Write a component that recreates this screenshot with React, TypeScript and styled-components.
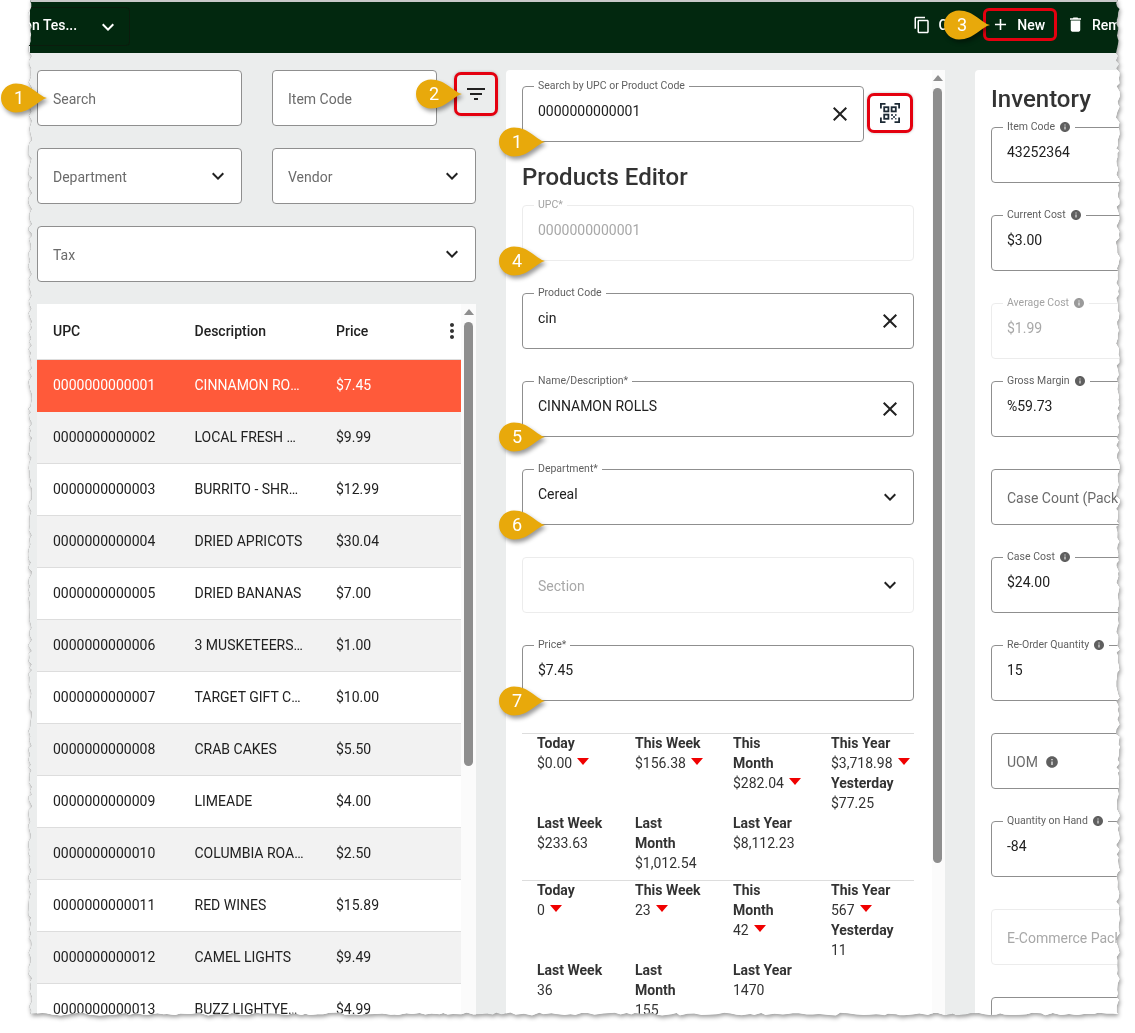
import React from 'react';
import styled, { createGlobalStyle } from 'styled-components';

const FONT = `Roboto, "Liberation Sans", sans-serif`;

const ICONS = {
  chevron: 'M16.59 8.59L12 13.17 7.41 8.59 6 10l6 6 6-6z',
  close: 'M19 6.41L17.59 5 12 10.59 6.41 5 5 6.41 10.59 12 5 17.59 6.41 19 12 13.41 17.59 19 19 17.59 13.41 12z',
  filter: 'M10 18h4v-2h-4v2zM3 6v2h18V6H3zm3 7h12v-2H6v2z',
  info: 'M12 2C6.48 2 2 6.48 2 12s4.48 10 10 10 10-4.48 10-10S17.52 2 12 2zm1 15h-2v-6h2v6zm0-8h-2V7h2v2z',
  copy: 'M16 1H4c-1.1 0-2 .9-2 2v14h2V3h12V1zm3 4H8c-1.1 0-2 .9-2 2v14c0 1.1.9 2 2 2h11c1.1 0 2-.9 2-2V7c0-1.1-.9-2-2-2zm0 16H8V7h11v14z',
  add: 'M19 13h-6v6h-2v-6H5v-2h6V5h2v6h6v2z',
  trash: 'M6 19c0 1.1.9 2 2 2h8c1.1 0 2-.9 2-2V7H6v12zM19 4h-3.5l-1-1h-5l-1 1H5v2h14V4z',
  dots: 'M12 8c1.1 0 2-.9 2-2s-.9-2-2-2-2 .9-2 2 .9 2 2 2zm0 2c-1.1 0-2 .9-2 2s.9 2 2 2 2-.9 2-2-.9-2-2-2zm0 6c-1.1 0-2 .9-2 2s.9 2 2 2 2-.9 2-2-.9-2-2-2z',
};

const rows = [
  ['0000000000001', 'CINNAMON ROLLS', '$7.45'],
  ['0000000000002', 'LOCAL FRESH WATER', '$9.99'],
  ['0000000000003', 'BURRITO - SHREDDED', '$12.99'],
  ['0000000000004', 'DRIED APRICOTS', '$30.04'],
  ['0000000000005', 'DRIED BANANAS', '$7.00'],
  ['0000000000006', '3 MUSKETEERS BAR', '$1.00'],
  ['0000000000007', 'TARGET GIFT CARD', '$10.00'],
  ['0000000000008', 'CRAB CAKES', '$5.50'],
  ['0000000000009', 'LIMEADE', '$4.00'],
  ['0000000000010', 'COLUMBIA ROAST', '$2.50'],
  ['0000000000011', 'RED WINES', '$15.89'],
  ['0000000000012', 'CAMEL LIGHTS', '$9.49'],
  ['0000000000013', 'BUZZ LIGHTYEAR', '$4.99'],
];

const salesStats = [
  [{ title: 'Today', value: '$0.00', down: true }],
  [{ title: 'This Week', value: '$156.38', down: true }],
  [{ title: 'This Month', value: '$282.04', down: true }],
  [{ title: 'This Year', value: '$3,718.98', down: true }, { title: 'Yesterday', value: '$77.25' }],
  [{ title: 'Last Week', value: '$233.63' }],
  [{ title: 'Last Month', value: '$1,012.54' }],
  [{ title: 'Last Year', value: '$8,112.23' }],
];

const unitStats = [
  [{ title: 'Today', value: '0', down: true }],
  [{ title: 'This Week', value: '23', down: true }],
  [{ title: 'This Month', value: '42', down: true }],
  [{ title: 'This Year', value: '567', down: true }, { title: 'Yesterday', value: '11' }],
  [{ title: 'Last Week', value: '36' }],
  [{ title: 'Last Month', value: '155' }],
  [{ title: 'Last Year', value: '1470' }],
];

const callouts = [
  { n: 1, x: 1, y: 83 },
  { n: 2, x: 416, y: 79 },
  { n: 1, x: 499, y: 127 },
  { n: 3, x: 944, y: 10 },
  { n: 4, x: 499, y: 246 },
  { n: 5, x: 499, y: 422 },
  { n: 6, x: 499, y: 510 },
  { n: 7, x: 499, y: 686 },
];

// rough torn paper edge, same every run
const tornEdge = () => {
  let seed = 11;
  const rnd = () => {
    seed = (seed * 16807) % 2147483647;
    return seed / 2147483647;
  };
  const pts: string[] = ['4px 0px', '1092px 0px'];
  for (let y = 3; y < 1014; y += 2 + rnd() * 4) pts.push(`${(1092 + (rnd() - 0.5) * 4).toFixed(1)}px ${y.toFixed(1)}px`);
  for (let x = 1092; x > 4; x -= 3 + rnd() * 7) pts.push(`${x.toFixed(1)}px ${(1014 + (rnd() - 0.5) * 3).toFixed(1)}px`);
  for (let y = 1014; y > 3; y -= 2 + rnd() * 4) pts.push(`${(4 + (rnd() - 0.5) * 4).toFixed(1)}px ${y.toFixed(1)}px`);
  return `polygon(${pts.join(',')})`;
};
const tornClip = tornEdge();

const Glyph = ({ d, size = 24, color = '#212121' }: { d: string; size?: number; color?: string }) => (
  <S_Svg viewBox="0 0 24 24" width={size} height={size} fill={color}>
    <path d={d} />
  </S_Svg>
);

const QrIcon = () => (
  <S_Svg viewBox="0 0 20 20" width={20} height={20}>
    <g fill="none" stroke="#1d2a35" strokeWidth="1.8">
      <path d="M.9 5.5V.9h4.6M14.5.9h4.6v4.6M.9 14.5v4.6h4.6M19.1 14.5v4.6h-4.6" />
      <rect x="4.2" y="4.2" width="4.2" height="4.2" />
      <rect x="11.6" y="4.2" width="4.2" height="4.2" />
      <rect x="4.2" y="11.6" width="4.2" height="4.2" />
    </g>
    <path fill="#4d5a66" d="M11 11h2v2h-2zM15 11h1.5v2H15zM13 13h2v2h-2zM11 15h2v1.5h-2zM15 15h1.5v1.5H15z" />
  </S_Svg>
);

interface FieldProps {
  label?: string;
  value?: string;
  placeholder?: string;
  info?: boolean;
  disabled?: boolean;
  trailing?: 'close' | 'chevron';
  width?: number;
  mb?: number;
}

const Field = ({ label, value, placeholder, info, disabled, trailing, width = 392, mb = 0 }: FieldProps) => (
  <S.FieldBox $width={width} $mb={mb} $disabled={disabled}>
    {label && (
      <S.FieldLabel $disabled={disabled}>
        {label}
        {info && <Glyph d={ICONS.info} size={12} color={disabled ? '#9a9a9a' : '#5f5f5f'} />}
      </S.FieldLabel>
    )}
    {value && <S.FieldValue $disabled={disabled}>{value}</S.FieldValue>}
    {placeholder && (
      <S.FieldPlaceholder $disabled={disabled}>
        {placeholder}
        {info && <Glyph d={ICONS.info} size={14} color="#5f5f5f" />}
      </S.FieldPlaceholder>
    )}
    {trailing && <Glyph d={ICONS[trailing]} />}
  </S.FieldBox>
);

const Stats = ({ items }: { items: { title: string; value: string; down?: boolean }[][] }) => (
  <S.StatsGrid>
    {items.map((cell, i) => (
      <S.StatCell key={i}>
        {cell.map((stat) => (
          <React.Fragment key={stat.title}>
            <S.StatTitle>{stat.title}</S.StatTitle>
            <S.StatValue>
              {stat.value}
              {stat.down && <S.DownMark />}
            </S.StatValue>
          </React.Fragment>
        ))}
      </S.StatCell>
    ))}
  </S.StatsGrid>
);

const App: React.FC = () => (
  <S.Page>
    <GlobalStyle />
    <S.TornFrame>
      <S.Sheet style={{ clipPath: tornClip }}>
        <S.Header>
          <S.Picker>
            <S.PickerText>on Tes...</S.PickerText>
            <Glyph d={ICONS.chevron} color="#fff" />
          </S.Picker>
          <S.Actions>
            <S.Action>
              <Glyph d={ICONS.copy} size={18} color="#fff" />
              Copy
            </S.Action>
            <S.NewAction>
              <Glyph d={ICONS.add} size={19} color="#fff" />
              New
            </S.NewAction>
            <S.RemoveAction>
              <Glyph d={ICONS.trash} size={19} color="#fff" />
              Remove
            </S.RemoveAction>
          </S.Actions>
        </S.Header>

        <S.Main>
          <S.ListColumn>
            <S.FilterRow>
              <Field placeholder="Search" width={205} />
              <Field placeholder="Item Code" width={165} />
              <S.FilterButton>
                <Glyph d={ICONS.filter} />
              </S.FilterButton>
            </S.FilterRow>
            <S.FilterRow>
              <Field placeholder="Department" trailing="chevron" width={205} />
              <Field placeholder="Vendor" trailing="chevron" width={204} />
            </S.FilterRow>
            <S.FilterRow>
              <Field placeholder="Tax" trailing="chevron" width={439} />
            </S.FilterRow>

            <S.TableWrap>
              <S.Table>
                <S.HeadRow>
                  <S.HeadCell>UPC</S.HeadCell>
                  <S.HeadCell>Description</S.HeadCell>
                  <S.HeadCell>Price</S.HeadCell>
                  <S.HeadMenu>
                    <Glyph d={ICONS.dots} color="#333" />
                  </S.HeadMenu>
                </S.HeadRow>
                {rows.map(([upc, name, price], i) => (
                  <S.Row key={upc} $selected={i === 0} $striped={i % 2 === 1}>
                    <S.Cell>{upc}</S.Cell>
                    <S.Cell>{name}</S.Cell>
                    <S.Cell>{price}</S.Cell>
                  </S.Row>
                ))}
              </S.Table>
              <S.ScrollTrack $width={15} $pad={3} $arrowTop={5} $gap={7}>
                <S.ScrollArrow />
                <S.ScrollThumb $height={444} />
              </S.ScrollTrack>
            </S.TableWrap>
          </S.ListColumn>

          <S.EditorPanel>
            <S.EditorBody>
              <S.SearchRow>
                <Field label="Search by UPC or Product Code" value="0000000000001" trailing="close" width={342} />
                <S.ScanButton>
                  <QrIcon />
                </S.ScanButton>
              </S.SearchRow>
              <S.EditorTitle>Products Editor</S.EditorTitle>
              <Field label="UPC*" value="0000000000001" disabled mb={32} />
              <Field label="Product Code" value="cin" trailing="close" mb={32} />
              <Field label="Name/Description*" value="CINNAMON ROLLS" trailing="close" mb={32} />
              <Field label="Department*" value="Cereal" trailing="chevron" mb={32} />
              <Field placeholder="Section" trailing="chevron" disabled mb={32} />
              <Field label="Price*" value="$7.45" mb={32} />
              <Stats items={salesStats} />
              <Stats items={unitStats} />
            </S.EditorBody>
            <S.ScrollTrack $width={13} $pad={1} $arrowTop={5} $gap={7}>
              <S.ScrollArrow />
              <S.ScrollThumb $height={775} />
            </S.ScrollTrack>
          </S.EditorPanel>

          <S.InventoryPanel>
            <S.InventoryTitle>Inventory</S.InventoryTitle>
            <Field label="Item Code" info value="43252364" mb={32} />
            <Field label="Current Cost" info value="$3.00" mb={32} />
            <Field label="Average Cost" info value="$1.99" disabled mb={22} />
            <Field label="Gross Margin" info value="%59.73" mb={32} />
            <Field placeholder="Case Count (Pack)" mb={32} />
            <Field label="Case Cost" info value="$24.00" mb={32} />
            <Field label="Re-Order Quantity" info value="15" mb={32} />
            <Field placeholder="UOM" info mb={32} />
            <Field label="Quantity on Hand" info value="-84" mb={32} />
            <Field placeholder="E-Commerce Pack" disabled mb={32} />
            <Field mb={32} />
          </S.InventoryPanel>
        </S.Main>
      </S.Sheet>
    </S.TornFrame>

    {callouts.map((c, i) => (
      <S.Callout key={i} $x={c.x} $y={c.y}>
        <S.CalloutShape viewBox="0 0 46 30" width={46} height={30}>
          <path
            fill="#e8a90b"
            d="M46 15C38 16.5 30 29.5 15 29.5 6.5 29.5 0 23 0 15S6.5.5 15 .5C30 .5 38 13.5 46 15Z"
          />
        </S.CalloutShape>
        <S.CalloutNumber>{c.n}</S.CalloutNumber>
      </S.Callout>
    ))}
  </S.Page>
);

export default App;

const GlobalStyle = createGlobalStyle`
  html, body {
    margin: 0;
    padding: 0;
    background: #fff;
    font-family: ${FONT};
    font-size: 14px;
  }
  * {
    box-sizing: border-box;
  }
`;

const S_Svg = styled.svg`
  display: block;
  flex-shrink: 0;
`;

const S = {
  Page: styled.div`
    position: relative;
    width: 1135px;
    height: 1033px;
    overflow: hidden;
    background: #fff;
  `,
  TornFrame: styled.div`
    margin-left: 26px;
    width: 1096px;
    height: 1020px;
    filter: drop-shadow(0 0 0.6px #777) drop-shadow(1px 2px 2px rgba(0, 0, 0, 0.4));
  `,
  Sheet: styled.div`
    width: 100%;
    height: 100%;
    padding-left: 4px;
    background: #ebeded;
    overflow: hidden;
  `,
  Header: styled.header`
    display: flex;
    height: 53px;
    width: 1150px;
    background: #02280f;
    border-top: 2px solid #c9c9c9;
  `,
  Picker: styled.div`
    display: flex;
    align-items: center;
    justify-content: space-between;
    flex-shrink: 0;
    width: 111px;
    height: 39px;
    margin: 5px 0 0 -11px;
    padding: 0 9px 0 4px;
    border: 1px solid #0b1c0d;
    border-radius: 4px;
  `,
  PickerText: styled.span`
    color: #fff;
    font-weight: 500;
    margin-top: -4px;
    white-space: nowrap;
  `,
  Actions: styled.div`
    display: flex;
    align-items: center;
    height: 33px;
    margin: 6px 0 0 782.5px;
    color: #fff;
    font-weight: 500;
    white-space: nowrap;
  `,
  Action: styled.div`
    display: flex;
    align-items: center;
    gap: 8px;
  `,
  NewAction: styled.div`
    display: flex;
    align-items: center;
    gap: 7px;
    height: 33px;
    margin-left: 13px;
    padding: 0 9px 0 5px;
    border: 3px solid #e4000f;
    border-radius: 6px;
  `,
  RemoveAction: styled.div`
    display: flex;
    align-items: center;
    gap: 7.5px;
    margin-left: 8.5px;
  `,
  Main: styled.main`
    display: flex;
    align-items: flex-start;
    padding: 17px 0 0 7px;
    height: 970px;
    overflow: hidden;
  `,
  ListColumn: styled.section`
    flex-shrink: 0;
    width: 439px;
  `,
  FilterRow: styled.div`
    display: flex;
    gap: 30px;
    margin-bottom: 22px;
  `,
  FilterButton: styled.button`
    flex-shrink: 0;
    display: flex;
    align-items: center;
    justify-content: center;
    width: 44px;
    height: 44px;
    margin: 2px 0 0 -13px;
    padding: 0;
    background: #ebeded;
    border: 3px solid #e4000f;
    border-radius: 7px;
    box-shadow: 0 0 3px rgba(0, 0, 0, 0.25);
  `,
  TableWrap: styled.div`
    display: flex;
    background: #fff;
  `,
  Table: styled.div`
    flex: 1;
    min-width: 0;
  `,
  HeadRow: styled.div`
    position: relative;
    display: grid;
    grid-template-columns: 141.5px 141.5px 1fr;
    align-items: center;
    height: 56px;
    padding-bottom: 2px;
    background: #fff;
    border-bottom: 1px solid #ddd;
  `,
  HeadCell: styled.div`
    padding: 0 16px;
    font-weight: 500;
    color: #212121;
  `,
  HeadMenu: styled.div`
    position: absolute;
    right: -3px;
    top: 15px;
  `,
  Row: styled.div<{ $selected?: boolean; $striped?: boolean }>`
    display: grid;
    grid-template-columns: 141.5px 141.5px 1fr;
    align-items: center;
    height: 52px;
    padding-bottom: 2px;
    color: ${(p) => (p.$selected ? '#fff' : '#212121')};
    background: ${(p) => (p.$selected ? '#ff5a3a' : p.$striped ? '#f2f2f2' : '#fff')};
    border-bottom: 1px solid ${(p) => (p.$selected ? '#ff5a3a' : '#ddd')};
  `,
  Cell: styled.div`
    padding: 0 16px;
    white-space: nowrap;
    overflow: hidden;
    text-overflow: ellipsis;
  `,
  ScrollTrack: styled.div<{ $width: number; $pad: number; $arrowTop: number; $gap: number }>`
    flex-shrink: 0;
    display: flex;
    flex-direction: column;
    align-items: flex-start;
    gap: ${(p) => p.$gap}px;
    width: ${(p) => p.$width}px;
    padding: ${(p) => p.$arrowTop}px 0 0 ${(p) => p.$pad}px;
    background: #fbfbfb;
  `,
  ScrollArrow: styled.div`
    width: 0;
    height: 0;
    border-left: 5px solid transparent;
    border-right: 5px solid transparent;
    border-bottom: 6px solid #8e8e8e;
  `,
  ScrollThumb: styled.div<{ $height: number }>`
    width: 9px;
    height: ${(p) => p.$height}px;
    background: #8e8e8e;
    border-radius: 5px;
  `,
  EditorPanel: styled.section`
    flex-shrink: 0;
    display: flex;
    width: 439px;
    margin-left: 30px;
    background: #fff;
    border-radius: 4px 4px 0 0;
  `,
  EditorBody: styled.div`
    width: 426px;
    padding: 16px 18px 0 16px;
  `,
  SearchRow: styled.div`
    display: flex;
    align-items: flex-start;
  `,
  ScanButton: styled.button`
    flex-shrink: 0;
    display: flex;
    align-items: center;
    justify-content: center;
    width: 46px;
    height: 40px;
    margin: 7px 0 0 3px;
    padding: 0;
    background: #fff;
    border: 3px solid #e4000f;
    border-radius: 7px;
    box-shadow: 0 0 3px rgba(0, 0, 0, 0.25);
  `,
  EditorTitle: styled.h2`
    margin: 19px 0 12px;
    font-size: 24px;
    line-height: 32px;
    font-weight: 500;
    color: #333;
  `,
  InventoryPanel: styled.section`
    flex-shrink: 0;
    width: 440px;
    margin-left: 30px;
    padding: 13px 16px 0;
    background: #fff;
    border-radius: 4px 4px 0 0;
  `,
  InventoryTitle: styled.h2`
    margin: 0 0 12px;
    font-size: 24px;
    line-height: 32px;
    font-weight: 500;
    color: #333;
  `,
  FieldBox: styled.div<{ $width: number; $mb: number; $disabled?: boolean }>`
    position: relative;
    flex-shrink: 0;
    display: flex;
    align-items: center;
    width: ${(p) => p.$width}px;
    height: 56px;
    margin-bottom: ${(p) => p.$mb}px;
    padding: 0 11px 0 15px;
    background: #fff;
    border: 1px solid ${(p) => (p.$disabled ? '#ececec' : '#8f8f8f')};
    border-radius: 4px;
  `,
  FieldLabel: styled.label<{ $disabled?: boolean }>`
    position: absolute;
    left: 11px;
    top: -8px;
    display: flex;
    align-items: center;
    gap: 4px;
    padding: 0 4px;
    height: 14px;
    font-size: 10.5px;
    line-height: 14px;
    white-space: nowrap;
    color: ${(p) => (p.$disabled ? '#a3a3a3' : '#616161')};
    background: #fff;
  `,
  FieldValue: styled.div<{ $disabled?: boolean }>`
    flex: 1;
    padding-bottom: 6px;
    color: ${(p) => (p.$disabled ? '#a8a8a8' : '#212121')};
  `,
  FieldPlaceholder: styled.div<{ $disabled?: boolean }>`
    flex: 1;
    display: flex;
    align-items: center;
    gap: 7px;
    padding-top: 2px;
    white-space: nowrap;
    color: ${(p) => (p.$disabled ? '#a8a8a8' : '#6b6b6b')};
  `,
  StatsGrid: styled.div`
    display: grid;
    grid-template-columns: repeat(4, 98px);
    row-gap: 1px;
    padding-bottom: 7px;
    border-top: 1px solid #ddd;
  `,
  StatCell: styled.div`
    margin-top: -1px;
    padding: 0 15px;
    line-height: 20px;
    color: #333;
  `,
  StatTitle: styled.div`
    font-weight: 700;
    color: #333;
  `,
  StatValue: styled.div`
    display: flex;
    align-items: center;
    gap: 5px;
    white-space: nowrap;
  `,
  DownMark: styled.span`
    width: 0;
    height: 0;
    margin-top: -4px;
    border-left: 6.5px solid transparent;
    border-right: 6.5px solid transparent;
    border-top: 7px solid #f00000;
  `,
  Callout: styled.div<{ $x: number; $y: number }>`
    position: absolute;
    left: ${(p) => p.$x}px;
    top: ${(p) => p.$y}px;
    width: 46px;
    height: 30px;
  `,
  CalloutShape: styled.svg`
    position: absolute;
    inset: 0;
    overflow: visible;
    filter: drop-shadow(2px 3px 2px rgba(0, 0, 0, 0.4));
  `,
  CalloutNumber: styled.span`
    position: absolute;
    left: 0;
    top: 0;
    width: 36px;
    line-height: 30px;
    font-size: 18px;
    text-align: center;
    color: #fff;
  `,
};
